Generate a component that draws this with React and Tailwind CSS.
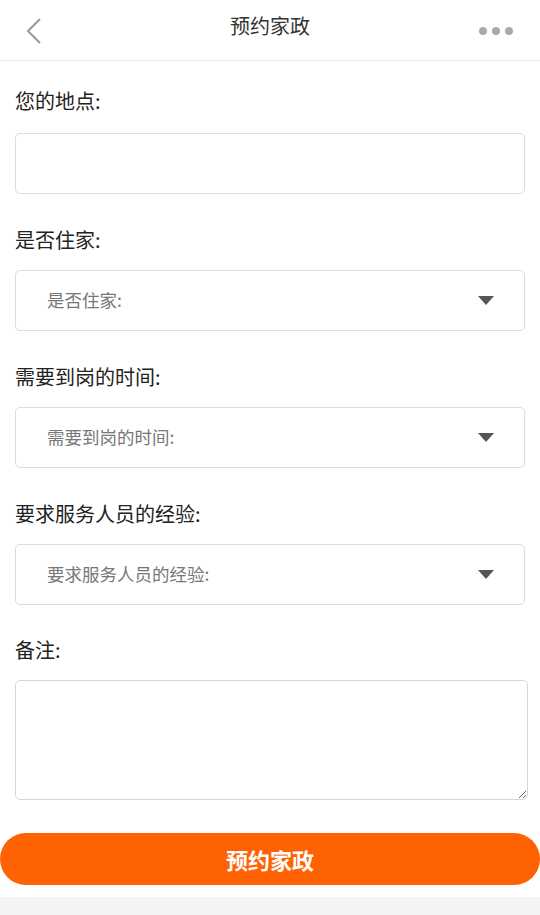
import React from 'react';

const font = { fontFamily: '"Noto Sans CJK SC", "Noto Sans", sans-serif' };

const SelectBox = ({ placeholder }) => (
  <div className="h-[61px] border border-[#dcdcdc] rounded-[5px] flex items-center pl-[31px] pr-[30px] justify-between">
    <span className="text-[17.5px] text-[#777]">{placeholder}</span>
    <svg width="16" height="9" viewBox="0 0 16 9">
      <path d="M0 0 L16 0 L8 9 Z" fill="#555" />
    </svg>
  </div>
);

const Label = ({ children, first, last }) => (
  <div
    className={`${first ? 'pt-[28px] pb-[20px]' : last ? 'pt-[33px] pb-[18px]' : 'pt-[34px] pb-[18px]'} text-[20px] leading-[24px] text-[#222]`}
  >
    {children}
  </div>
);

export default function App() {
  return (
    <div className="w-[540px] h-[915px] bg-white flex flex-col overflow-hidden" style={font}>
      <div className="h-[61px] border-b border-[#ececec] flex items-center justify-between px-[24px] relative">
        <svg width="20" height="30" viewBox="0 0 20 30" className="mt-[2px]">
          <path d="M16 3 L4 15 L16 27" fill="none" stroke="#999" strokeWidth="2" />
        </svg>
        <div className="absolute left-0 right-0 top-0 h-[52px] flex items-center justify-center text-[20px] text-[#333] pointer-events-none">
          预约家政
        </div>
        <div className="flex gap-[5px] mr-[3px] mt-[2px]">
          <span className="w-[8px] h-[8px] rounded-full bg-[#aaa]" />
          <span className="w-[8px] h-[8px] rounded-full bg-[#aaa]" />
          <span className="w-[8px] h-[8px] rounded-full bg-[#aaa]" />
        </div>
      </div>

      <div className="px-[15px]">
        <Label first>您的地点:</Label>
        <div className="h-[61px] w-[510px] border border-[#dcdcdc] rounded-[5px]" />

        <Label>是否住家:</Label>
        <SelectBox placeholder="是否住家:" />

        <Label>需要到岗的时间:</Label>
        <SelectBox placeholder="需要到岗的时间:" />

        <Label>要求服务人员的经验:</Label>
        <SelectBox placeholder="要求服务人员的经验:" />

        <Label last>备注:</Label>
        <textarea className="block w-[513px] h-[120px] border border-[#d6d6d6] rounded-[5px] outline-none resize" />
      </div>

      <div className="pt-[33px]">
        <button className="w-[540px] h-[52px] rounded-full bg-[#ff6203] text-white text-[22px] font-bold flex items-center justify-center">
          预约家政
        </button>
      </div>
      <div className="h-[12px]" />
      <div className="flex-1 bg-[#f4f4f4]" />
    </div>
  );
}
